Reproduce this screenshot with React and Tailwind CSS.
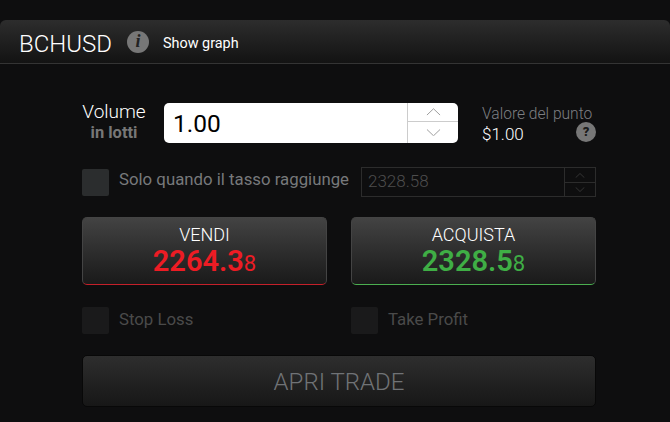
const Chevron = ({ up, className }) => (
  <svg viewBox="0 0 16 8" fill="none" stroke="currentColor" strokeWidth="1" className={className}>
    <path d={up ? "M1 7.5 8 .8l7 6.7" : "M1 .5l7 6.7L15 .5"} />
  </svg>
);

function Check({ label, dim, raised }) {
  return (
    <div className="flex items-center">
      <span className={`h-[27px] w-[27px] rounded-[2px] ${dim ? "bg-[#1a1a1b]" : "bg-[#2b2d2e]"}`} />
      <span className={`ml-[10px] text-[16.8px] ${raised ? "mb-[6px]" : "mb-[2px]"} ${dim ? "text-[#4a4a4a]" : "text-[#77797b]"}`}>{label}</span>
    </div>
  );
}

function Trade({ label, price, last, color, line }) {
  return (
    <button className={`flex h-[68px] flex-col items-center rounded-[5px] border border-[#444] bg-gradient-to-b from-[#434343] to-[#1a1a1a] pt-[7px] ${line}`}>
      <span className="text-[18px] leading-[20px] font-light text-white">{label}</span>
      <span className={`text-[29px] leading-[33px] font-semibold ${color}`}>
        {price}
        <span className="text-[22px] font-normal">{last}</span>
      </span>
    </button>
  );
}

export default function App() {
  return (
    <div className="h-[422px] w-[670px] overflow-hidden bg-[#0e0e0f] pt-[20px] font-['Roboto',sans-serif]">
      {/* Intestazione */}
      <div className="flex h-[44px] items-center rounded-t-[6px] border-b border-[#343434] bg-gradient-to-b from-[#2d2d2d] to-[#131313] pl-[19px]">
        <h1 className="mt-[4px] text-[24px] font-light text-white">BCHUSD</h1>
        <span className="ml-[15px] flex h-[22px] w-[22px] items-center justify-center rounded-full bg-[#777] font-['Liberation_Serif',serif] text-[18px] font-bold text-[#222] italic">
          i
        </span>
        <span className="mt-[4px] ml-[14px] text-[14.4px] text-white">Show graph</span>
      </div>

      <div className="mx-[82px] w-[514px]">
        {/* Volume */}
        <div className="mt-[39px] flex h-[40px]">
          <div className="flex w-[64px] flex-col items-center">
            <span className="text-[19px] leading-[17px] font-light text-white">Volume</span>
            <span className="text-[16.5px] leading-[26px] font-bold text-[#777]">in lotti</span>
          </div>
          <div className="ml-[18px] flex w-[294px] overflow-hidden rounded-[5px] bg-white">
            <span className="flex-1 pl-[9px] text-[24.5px] leading-[41px] text-black">1.00</span>
            <div className="flex w-[51px] flex-col border-l border-[#ccc] text-[#999]">
              <span className="flex h-[19px] items-center justify-center border-b border-[#ccc]">
                <Chevron up className="w-[15px]" />
              </span>
              <span className="flex flex-1 items-center justify-center">
                <Chevron className="w-[15px]" />
              </span>
            </div>
          </div>
          <div className="relative ml-[24px] flex-1">
            <div className="text-[15.6px] leading-[22px] font-light text-[#7d7f82]">Valore del punto</div>
            <div className="text-[17px] leading-[18px] font-light text-white">$1.00</div>
            <span className="absolute top-[19px] left-[94px] flex h-[20px] w-[20px] items-center justify-center rounded-full bg-[#777] text-[13px] font-black text-[#1a1a1a]">
              ?
            </span>
          </div>
        </div>

        {/* Tasso */}
        <div className="mt-[24px] flex h-[30px] items-start justify-between">
          <Check raised label="Solo quando il tasso raggiunge" />
          <div className="flex h-[30px] w-[235px] border border-[#2c2c2c]">
            <span className="flex-1 pl-[6px] text-[17px] leading-[27px] font-light text-[#4d4d4d]">2328.58</span>
            <div className="flex w-[31px] flex-col border-l border-[#2c2c2c] text-[#4a4a4a]">
              <span className="flex h-[15px] items-center justify-center border-b border-[#2c2c2c]">
                <Chevron up className="w-[10px]" />
              </span>
              <span className="flex flex-1 items-center justify-center">
                <Chevron className="w-[10px]" />
              </span>
            </div>
          </div>
        </div>

        {/* Vendi / Acquista */}
        <div className="mt-[20px] grid grid-cols-[245px_245px] gap-[24px]">
          <Trade label="VENDI" price="2264.3" last="8" color="text-[#ed1c24]" line="border-b-[#c4202a]" />
          <Trade label="ACQUISTA" price="2328.5" last="8" color="text-[#3fae45]" line="border-b-[#4bae50]" />
        </div>

        {/* Stop Loss / Take Profit */}
        <div className="mt-[22px] grid grid-cols-[245px_245px] gap-[24px]">
          <Check dim label="Stop Loss" />
          <Check dim label="Take Profit" />
        </div>

        <button className="mt-[21px] flex h-[52px] w-[514px] items-center justify-center rounded-[5px] border border-[#080808] bg-gradient-to-b from-[#2e2e2e] to-[#171717] pt-[2px] text-[24px] font-light text-[#707376]">
          APRI TRADE
        </button>
      </div>
    </div>
  );
}
